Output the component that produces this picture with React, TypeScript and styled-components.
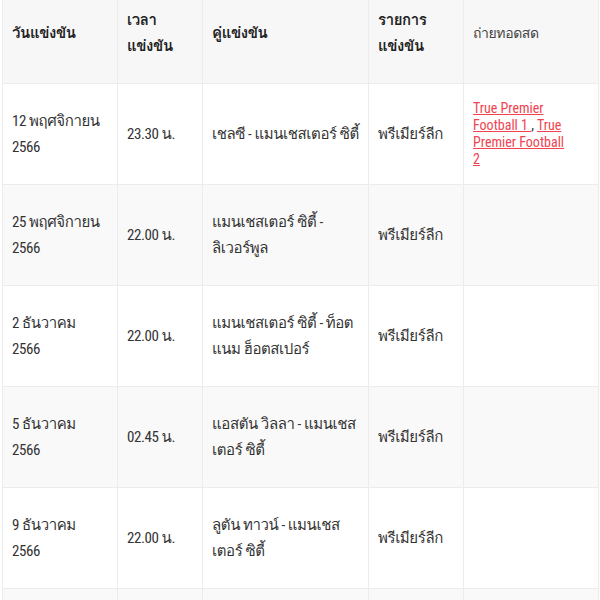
import React from "react";
import styled, { createGlobalStyle } from "styled-components";

const GlobalStyle = createGlobalStyle`
  html, body {
    margin: 0;
    padding: 0;
    background: #fff;
  }
  body {
    font-family: "Roboto Condensed", Loma, Roboto, sans-serif;
    color: #333;
    overflow: hidden;
  }
`;

const Wrap = styled.div`
  padding: 0 2px;
`;

const Table = styled.table`
  width: 100%;
  table-layout: fixed;
  border-collapse: collapse;
  font-size: 15px;
  line-height: 26px;
  letter-spacing: -0.4px;
`;

const Th = styled.th<{ $light?: boolean }>`
  height: 83px;
  box-sizing: border-box;
  padding: 7px 9px 24px;
  text-align: left;
  vertical-align: middle;
  background: #f7f7f7;
  border: 1px solid #ececec;
  border-top: none;
  color: ${(p) => (p.$light ? "#444" : "#222")};
  font-weight: ${(p) => (p.$light ? 400 : 700)};
  font-size: ${(p) => (p.$light ? "14px" : "15px")};
`;

const Row = styled.tr<{ $alt?: boolean }>`
  height: 101px;
  background: ${(p) => (p.$alt ? "#f9f9f9" : "#fff")};
`;

const Td = styled.td`
  padding: 8px 9px;
  vertical-align: middle;
  border: 1px solid #ececec;
  color: #333;
`;

const DatePart = styled.span`
  display: block;
`;

const LinkCell = styled(Td)`
  font-size: 14px;
  line-height: 17px;
  letter-spacing: 0;
  padding-right: 30px;
`;

const Live = styled.a`
  color: #f0434f;
  text-decoration: underline;
`;

const Comma = styled.span`
  color: #333;
`;

type Match = {
  day: string;
  year: string;
  time: string;
  teams: string;
  league: string;
  live?: boolean;
};

const matches: Match[] = [
  { day: "12 พฤศจิกายน", year: "2566", time: "23.30 น.", teams: "เชลซี - แมนเชสเตอร์ ซิตี้", league: "พรีเมียร์ลีก", live: true },
  { day: "25 พฤศจิกายน", year: "2566", time: "22.00 น.", teams: "แมนเชสเตอร์ ซิตี้ - ลิเวอร์พูล", league: "พรีเมียร์ลีก" },
  { day: "2 ธันวาคม", year: "2566", time: "22.00 น.", teams: "แมนเชสเตอร์ ซิตี้ - ท็อตแนม ฮ็อตสเปอร์", league: "พรีเมียร์ลีก" },
  { day: "5 ธันวาคม", year: "2566", time: "02.45 น.", teams: "แอสตัน วิลลา - แมนเชสเตอร์ ซิตี้", league: "พรีเมียร์ลีก" },
  { day: "9 ธันวาคม", year: "2566", time: "22.00 น.", teams: "ลูตัน ทาวน์ - แมนเชสเตอร์ ซิตี้", league: "พรีเมียร์ลีก" },
  { day: "16 ธันวาคม", year: "2566", time: "22.00 น.", teams: "แมนเชสเตอร์ ซิตี้ - คริสตัล พาเลซ", league: "พรีเมียร์ลีก" },
];

export default function App() {
  return (
    <>
      <GlobalStyle />
      <Wrap>
        <Table>
          <colgroup>
            <col style={{ width: 115 }} />
            <col style={{ width: 85 }} />
            <col style={{ width: 166 }} />
            <col style={{ width: 95 }} />
            <col style={{ width: 135 }} />
          </colgroup>
          <thead>
            <tr>
              <Th>วันแข่งขัน</Th>
              <Th>เวลาแข่งขัน</Th>
              <Th>คู่แข่งขัน</Th>
              <Th>รายการแข่งขัน</Th>
              <Th $light>ถ่ายทอดสด</Th>
            </tr>
          </thead>
          <tbody>
            {matches.map((m, i) => (
              <Row key={i} $alt={i % 2 === 1}>
                <Td>
                  <DatePart>{m.day}</DatePart>
                  <DatePart>{m.year}</DatePart>
                </Td>
                <Td>{m.time}</Td>
                <Td>{m.teams}</Td>
                <Td>{m.league}</Td>
                <LinkCell>
                  {m.live && (
                    <>
                      <Live href="#">True Premier Football 1 </Live>
                      <Comma>, </Comma>
                      <Live href="#">True Premier Football 2</Live>
                    </>
                  )}
                </LinkCell>
              </Row>
            ))}
          </tbody>
        </Table>
      </Wrap>
    </>
  );
}
